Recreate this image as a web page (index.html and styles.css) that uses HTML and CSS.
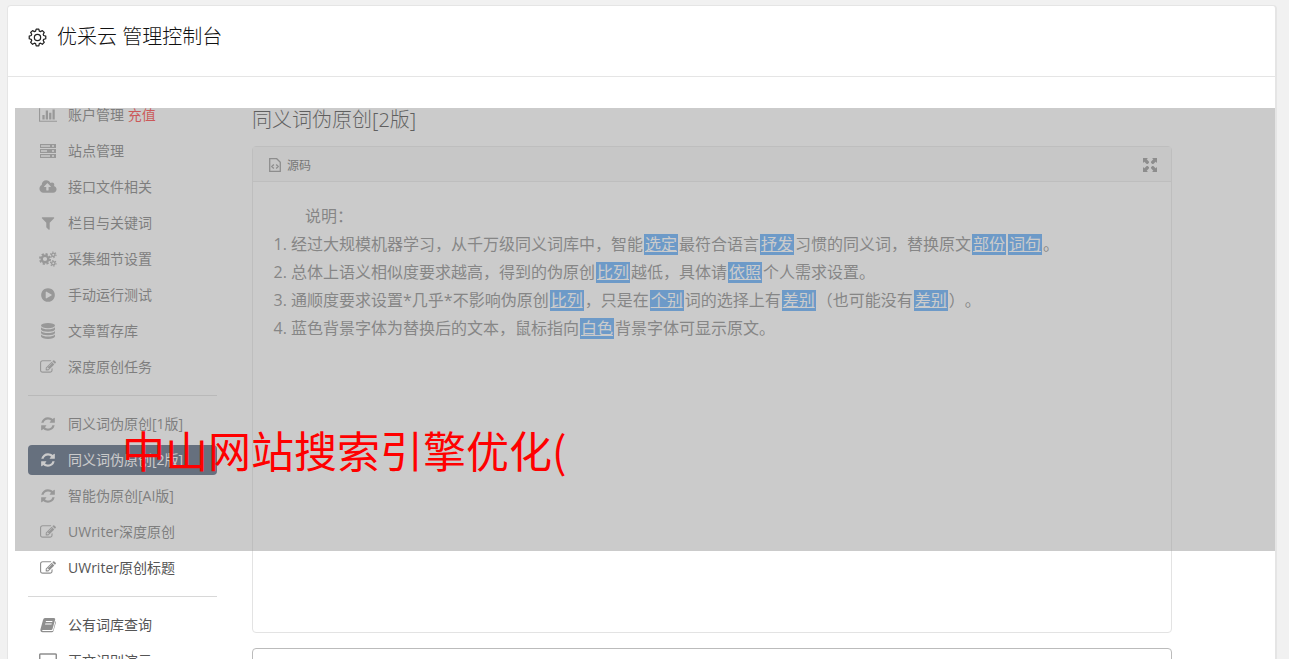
FILE: index.html
```html
<!DOCTYPE html>
<html lang="zh-CN">
<head>
<meta charset="UTF-8">
<meta name="viewport" content="width=device-width, initial-scale=1.0">
<title>优采云 管理控制台</title>
<link rel="stylesheet" href="styles.css">
</head>
<body>
<svg class="sprite" aria-hidden="true">
    <symbol id="i-chart" viewBox="0 0 2048 1792"><path d="M640 896v512h-256v-512h256zm384-512v1024h-256v-1024h256zm1024 1152v128h-2048v-1536h128v1408h1920zm-640-896v768h-256v-768h256zm384-384v1152h-256v-1152h256z"/></symbol>
    <symbol id="i-server" viewBox="0 0 18 16"><path fill-rule="evenodd" d="M1 1h16v4H1zM2 2.300v1.400h9V2.300zM1 6h16v4H1zM2 7.300v1.400h6V7.300zM1 11h16v4H1zM2 12.300v1.400h9v-1.400zM13 2.300v1.400h2V2.300zM13 7.300v1.400h2V7.300zM13 12.300v1.400h2v-1.400z"/></symbol>
    <symbol id="i-cloud" viewBox="0 0 1920 1792"><path d="M1280 864q0-14-9-23l-352-352q-9-9-23-9t-23 9l-351 351q-10 12-10 24 0 14 9 23t23 9h224v352q0 13 9.500 22.500t22.500 9.500h192q13 0 22.500-9.500t9.500-22.500v-352h224q13 0 22.500-9.500t9.500-22.500zm640 288q0 159-112.500 271.500t-271.500 112.500h-1088q-185 0-316.500-131.500t-131.500-316.500q0-130 70-240t188-165q-2-30-2-43 0-212 150-362t362-150q156 0 285.500 87t188.500 231q71-62 166-62 106 0 181 75t75 181q0 76-41 138 130 31 213.500 135.500t83.500 238.500z"/></symbol>
    <symbol id="i-filter" viewBox="0 0 1792 1792"><path d="M1595 295q17 41-14 70l-493 493v742q0 42-39 59-13 5-25 5-27 0-45-19l-256-256q-19-19-19-45v-486l-493-493q-31-29-14-70 17-39 59-39h1280q42 0 59 39z"/></symbol>
    <symbol id="i-cogs" viewBox="0 0 18 16">
        <g fill="none" stroke="currentColor">
            <circle cx="6" cy="8" r="3.300" stroke-width="2.400"/>
            <circle cx="6" cy="8" r="5.100" stroke-width="1.800" stroke-dasharray="2.200 1.800"/>
            <circle cx="14.300" cy="3.800" r="1.700" stroke-width="1.300"/>
            <circle cx="14.300" cy="3.800" r="2.800" stroke-width="1.100" stroke-dasharray="1.300 1.630"/>
            <circle cx="14.300" cy="12.300" r="1.700" stroke-width="1.300"/>
            <circle cx="14.300" cy="12.300" r="2.800" stroke-width="1.100" stroke-dasharray="1.300 1.630"/>
        </g>
    </symbol>
    <symbol id="i-play" viewBox="0 0 1792 1792"><path d="M896 128q209 0 385.500 103t279.500 279.500 103 385.500-103 385.500-279.500 279.500-385.500 103-385.500-103-279.500-279.500-103-385.500 103-385.500 279.500-279.500 385.500-103zm384 823q32-18 32-55t-32-55l-544-320q-31-19-64-1-32 19-32 56v640q0 37 32 56 16 8 32 8 17 0 32-9z"/></symbol>
    <symbol id="i-db" viewBox="0 0 16 16"><ellipse cx="8" cy="2.600" rx="7" ry="2.600"/><path d="M1 4.300q2 2 7 2t7-2v2.200q-1 2.200-7 2.200T1 6.500zM1 8q2 2 7 2t7-2v2q-1 2.200-7 2.200T1 10zM1 11.600q2 2 7 2t7-2v2Q14 16 8 16t-7-2.400z"/></symbol>
    <symbol id="i-edit" viewBox="0 0 1792 1792"><path d="M888 1184l116-116-152-152-116 116v56h96v96h56zm440-720q-16-16-33 1l-350 350q-17 17-1 33t33-1l350-350q17-17 1-33zm80 594v190q0 119-84.500 203.500t-203.500 84.500h-832q-119 0-203.500-84.500t-84.500-203.500v-832q0-119 84.500-203.500t203.500-84.500h832q63 0 117 25 15 7 18 23 3 17-9 29l-49 49q-14 14-32 8-23-6-45-6h-832q-66 0-113 47t-47 113v832q0 66 47 113t113 47h832q66 0 113-47t47-113v-126q0-13 9-22l64-64q15-15 35-7t20 29zm-96-738l288 288-672 672h-288v-288zm444 132l-92 92-288-288 92-92q28-28 68-28t68 28l152 152q28 28 28 68t-28 68z"/></symbol>
    <symbol id="i-refresh" viewBox="0 0 1792 1792"><path d="M1639 1056q0 5-1 7-64 268-268 434.500t-478 166.500q-146 0-282.500-55t-243.500-157l-129 129q-19 19-45 19t-45-19-19-45v-448q0-26 19-45t45-19h448q26 0 45 19t19 45-19 45l-137 137q71 66 161 102t187 36q134 0 250-65t186-179q11-17 53-117 8-23 30-23h192q13 0 22.500 9.500t9.500 22.500zm25-800v448q0 26-19 45t-45 19h-448q-26 0-45-19t-19-45 19-45l138-138q-148-137-349-137-134 0-250 65t-186 179q-11 17-53 117-8 23-30 23h-199q-13 0-22.500-9.500t-9.500-22.500v-7q65-268 270-434.500t480-166.500q146 0 284 55.500t245 156.500l130-129q19-19 45-19t45 19 19 45z"/></symbol>
    <symbol id="i-book" viewBox="0 0 16 16"><path fill-rule="evenodd" d="M5 1h9q1.500 0 1.200 1.500L12.500 12q-.3 1-1.300 1H3q-1 0-.9.500.1.500.9.500h9.300q.7 0 .9-.7L15.600 4q.6.600.3 1.500L13.500 14q-.4 1.200-1.700 1.200H2.500Q.3 15.200.4 12.500L3 3q.5-2 2-2zM6 4l-.3 1h6.500l.3-1zM5.300 6.500l-.3 1h6.500l.3-1z"/></symbol>
    <symbol id="i-screen" viewBox="0 0 18 16"><path fill="none" stroke="currentColor" stroke-width="1.500" d="M1.700 1h14.600q1 0 1 1v9q0 1-1 1H1.700q-1 0-1-1V2q0-1 1-1zM6 15h6"/></symbol>
    <symbol id="i-gear" viewBox="0 0 20 20">
        <g fill="none" stroke="currentColor" stroke-width="1.300">
            <path stroke-linejoin="round" d="M8.600 1.200h2.800l.5 2.100 1.300.5 1.900-1.100 2 2-1.100 1.900.5 1.300 2.200.6v2.800l-2.200.6-.5 1.300 1.100 1.900-2 2-1.900-1.100-1.300.5-.5 2.200H8.600L8 16.500 6.700 16l-1.900 1.100-2-2 1.100-1.900-.5-1.300-2.100-.6V8.500l2.100-.6.500-1.300-1.100-1.900 2-2 1.900 1.100L8 3.300z"/>
            <circle cx="10" cy="10" r="3.300"/>
        </g>
    </symbol>
    <symbol id="i-source" viewBox="0 0 14 16"><path fill="none" stroke="currentColor" stroke-width="1.300" d="M1.700 1.700h7l3.600 3.600v9H1.700zM5.800 7.500 3.800 9.500l2 2M8.200 7.500l2 2-2 2"/></symbol>
    <symbol id="i-expand" viewBox="0 0 14 14"><path d="M0 0h5L3.700 1.300 6 3.700v1L4.700 6h-1L1.300 3.700 0 5zM14 0v5l-1.300-1.300L10.300 6h-1L8 4.700v-1l2.300-2.400L9 0zM0 14V9l1.300 1.300L3.700 8h1L6 9.300v1l-2.300 2.400L5 14zM14 14H9l1.300-1.300L8 10.300v-1L9.300 8h1l2.400 2.300L14 9z"/></symbol>
</svg>

<div class="panel">
    <header class="panel-header">
        <svg class="gear"><use href="#i-gear"/></svg>
        <h1>优采云 管理控制台</h1>
    </header>

    <div class="panel-body">
        <nav class="sidebar">
            <a href="#"><svg><use href="#i-chart"/></svg><span>账户管理 <span class="recharge">充值</span></span></a>
            <a href="#"><svg><use href="#i-server"/></svg>站点管理</a>
            <a href="#"><svg><use href="#i-cloud"/></svg>接口文件相关</a>
            <a href="#"><svg><use href="#i-filter"/></svg>栏目与关键词</a>
            <a href="#"><svg><use href="#i-cogs"/></svg>采集细节设置</a>
            <a href="#"><svg><use href="#i-play"/></svg>手动运行测试</a>
            <a href="#"><svg><use href="#i-db"/></svg>文章暂存库</a>
            <a href="#"><svg><use href="#i-edit"/></svg>深度原创任务</a>
            <hr>
            <a href="#"><svg><use href="#i-refresh"/></svg>同义词伪原创[1版]</a>
            <a href="#" class="active"><svg><use href="#i-refresh"/></svg>同义词伪原创[2版]</a>
            <a href="#"><svg><use href="#i-refresh"/></svg>智能伪原创[AI版]</a>
            <a href="#"><svg><use href="#i-edit"/></svg>UWriter深度原创</a>
            <a href="#"><svg><use href="#i-edit"/></svg>UWriter原创标题</a>
            <hr>
            <a href="#"><svg><use href="#i-book"/></svg>公有词库查询</a>
            <a href="#"><svg><use href="#i-screen"/></svg>正文识别演示</a>
        </nav>

        <main class="content">
            <h2>同义词伪原创[2版]</h2>
            <section class="editor">
                <div class="toolbar">
                    <button type="button"><svg class="source"><use href="#i-source"/></svg>源码</button>
                    <button type="button" aria-label="全屏"><svg class="expand"><use href="#i-expand"/></svg></button>
                </div>
                <div class="text">
                    <p>说明：</p>
                    <ol>
                        <li>经过大规模机器学习，从千万级同义词库中，智能<u>选定</u>最符合语言<u>抒发</u>习惯的同义词，替换原文<u>部份</u><u>词句</u>。</li>
                        <li>总体上语义相似度要求越高，得到的伪原创<u>比列</u>越低，具体请<u>依照</u>个人需求设置。</li>
                        <li>通顺度要求设置*几乎*不影响伪原创<u>比列</u>，只是在<u>个别</u>词的选择上有<u>差别</u>（也可能没有<u>差别</u>）。</li>
                        <li>蓝色背景字体为替换后的文本，鼠标指向<u>白色</u>背景字体可显示原文。</li>
                    </ol>
                </div>
            </section>
            <textarea aria-label="原文"></textarea>
        </main>
    </div>

    <div class="cover"><p>中山网站搜索引擎优化(</p></div>
</div>
</body>
</html>
```
FILE: styles.css
```css
html {
    overflow: hidden;
}
body {
    margin: 0;
    padding: 5px 12px 0 7px;
    background-color: #f1f1f1;
    font-family: "Open Sans", "Noto Sans CJK SC", sans-serif;
    font-size: 14px;
    color: #666;
    text-spacing-trim: space-all;
}
.sprite {
    display: none;
}
svg {
    fill: currentColor;
    flex: none;
}
h1, h2 {
    margin: 0;
    font-family: "Noto Sans", "Noto Sans CJK SC", sans-serif;
    font-size: 20px;
    font-weight: 300;
    line-height: 28px;
    color: #111;
}

.panel {
    position: relative;
    background-color: #fff;
    border: 1px solid #e5e5e5;
    border-right-width: 2px;
    border-radius: 4px;
}
.panel-header {
    display: flex;
    align-items: center;
    gap: 10px;
    padding: 17px 20px 25px;
    border-bottom: 1px solid #e5e5e5;
}
.gear {
    width: 19px;
    height: 19px;
    color: #222;
}
.panel-body {
    display: flex;
    gap: 35px;
    padding: 23px 103px 20px 20px;
}

/* left menu */
.sidebar {
    display: flex;
    flex-direction: column;
    flex: none;
    gap: 6px;
    width: 189px;
}
.sidebar a {
    display: flex;
    align-items: center;
    gap: 11px;
    padding: 0 11px;
    line-height: 30px;
    border-radius: 4px;
    color: #555;
    text-decoration: none;
}
.sidebar svg {
    width: 18px;
    height: 16px;
    color: #8f8f8f;
}
.sidebar .active,
.sidebar .active svg {
    color: #fff;
}
.sidebar .active {
    background-color: #213556;
}
.sidebar .recharge {
    color: #f00;
}
.sidebar hr {
    width: 100%;
    height: 1px;
    margin: 7px 0;
    border: none;
    background-color: #d8d8d8;
}

/* editor */
.content {
    flex: 1;
    min-width: 0;
    padding-top: 6px;
}
.editor {
    min-height: 485px;
    margin: 12px 0 15px;
    border: 1px solid #e3e3e3;
    border-radius: 4px;
}
.toolbar {
    display: flex;
    justify-content: space-between;
    align-items: center;
    height: 34px;
    padding: 0 14px 0 15px;
    background-color: #f5f5f5;
    border-bottom: 1px solid #e3e3e3;
}
.toolbar button {
    display: flex;
    align-items: center;
    gap: 5px;
    padding: 2px 0 0;
    border: none;
    background: none;
    font: inherit;
    font-size: 12px;
    color: #444;
}
.toolbar svg {
    color: #777;
}
.source {
    width: 14px;
    height: 16px;
}
.expand {
    width: 14px;
    height: 14px;
}
.text {
    padding: 20px;
    font-size: 16px;
    line-height: 28px;
}
.text p {
    margin: 0;
    text-indent: 32px;
}
.text ol {
    margin: 0;
    padding-left: 18px;
}
.text u {
    display: inline-block;
    margin: 0 1px;
    padding: 0 1px;
    line-height: 21px;
    background-color: #2f93f9;
    color: #fff;
}
textarea {
    display: block;
    box-sizing: border-box;
    width: 100%;
    height: 200px;
    border: 1px solid #bbb;
    border-radius: 4px;
    resize: none;
}

/* grey banner over the page */
.cover {
    position: absolute;
    top: 102px;
    left: 7px;
    right: 0;
    height: 443px;
    background-color: rgba(160, 160, 160, 0.55);
}
.cover p {
    margin: 309px 0 0 107px;
    font-family: "Noto Sans CJK SC", sans-serif;
    font-size: 43px;
    font-weight: 400;
    line-height: 64px;
    color: #f00;
}
```
